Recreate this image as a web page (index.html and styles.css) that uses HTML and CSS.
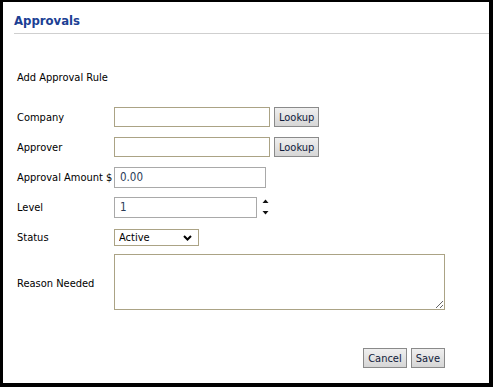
FILE: index.html
```html
<!DOCTYPE html>
<html lang="en">
<head>
<meta charset="utf-8">
<title>Approvals</title>
<link rel="stylesheet" href="styles.css">
</head>
<body>
<div class="panel">
  <div class="header">
    <h1 class="title">Approvals</h1>
  </div>
  <form class="form">
    <div class="section-title">Add Approval Rule</div>
    <div class="grid">
      <label class="label">Company</label>
      <div class="field">
        <input class="input input-khaki w-wide" type="text">
        <button type="button" class="btn">Lookup</button>
      </div>

      <label class="label">Approver</label>
      <div class="field">
        <input class="input input-khaki w-wide" type="text">
        <button type="button" class="btn">Lookup</button>
      </div>

      <label class="label">Approval Amount $</label>
      <div class="field">
        <input class="input input-grey w-amount" type="text" value="0.00">
      </div>

      <label class="label">Level</label>
      <div class="field">
        <input class="input input-grey w-level" type="text" value="1">
        <span class="spinner">
          <svg width="7" height="18" viewBox="0 0 7 18"><path d="M0.5 5 L3.5 1.5 L6.5 5 Z" fill="#111"/><path d="M0.5 13 L3.5 16.5 L6.5 13 Z" fill="#111"/></svg>
        </span>
      </div>

      <label class="label">Status</label>
      <div class="field">
        <div class="select-wrap">
          <select class="select"><option>Active</option><option>Inactive</option></select>
          <svg class="chevron" width="9" height="6" viewBox="0 0 9 6"><path d="M1 1 L4.5 4.5 L8 1" fill="none" stroke="#000" stroke-width="2"/></svg>
        </div>
      </div>

      <label class="label label-reason">Reason Needed</label>
      <div class="field">
        <textarea class="textarea"></textarea>
      </div>
    </div>
    <div class="actions">
      <button type="button" class="btn">Cancel</button>
      <button type="button" class="btn">Save</button>
    </div>
  </form>
</div>
</body>
</html>
```
FILE: styles.css
```css
html, body {
  margin: 0;
  padding: 0;
  background: #000;
  height: 100%;
}
body {
  padding: 2px 4px 4px 3px;
  box-sizing: border-box;
  font-family: "DejaVu Sans Condensed", "DejaVu Sans", "Liberation Sans", sans-serif;
  font-size: 11px;
  color: #000;
}
.panel {
  background: #fff;
  height: 100%;
  display: flex;
  flex-direction: column;
}
.header {
  margin-left: 11px;
  height: 31px;
  border-bottom: 1px solid #cfcfcf;
}
.title {
  margin: 0;
  padding-top: 10px;
  font-size: 13px;
  line-height: 17px;
  font-weight: bold;
  color: #1c3f94;
}
.form {
  padding-left: 14px;
  width: 428px;
}
.section-title {
  margin-top: 37px;
  line-height: 14px;
}
.grid {
  margin-top: 17px;
  display: grid;
  grid-template-columns: 97px auto;
  grid-template-rows: repeat(5, 30px) auto;
  align-items: center;
}
.label {
  line-height: 14px;
  padding-top: 2px;
}
.label-reason {
  padding-top: 5px;
}
.field {
  display: flex;
  align-items: center;
  gap: 4px;
}
.input {
  box-sizing: border-box;
  margin: 0;
  padding: 0 5px;
  font: inherit;
  font-size: 11.5px;
  color: #2b3b57;
  background: #fff;
  outline: none;
}
.input-khaki {
  border: 1px solid #aba385;
  height: 20px;
}
.input-grey {
  border: 1px solid #a9a9a9;
  height: 21px;
}
.w-wide { width: 156px; }
.w-amount { width: 152px; }
.w-level { width: 143px; }
.spinner {
  display: flex;
  margin-left: 1px;
}
.btn {
  box-sizing: border-box;
  height: 20px;
  margin: 0;
  padding: 0 4px;
  font: inherit;
  font-size: 11px;
  color: #0f1a3a;
  border: 1px solid #8a8a8a;
  background: linear-gradient(#efefef, #d6d6d6);
  border-radius: 0;
}
.select-wrap {
  position: relative;
  display: flex;
}
.select {
  box-sizing: border-box;
  appearance: none;
  -webkit-appearance: none;
  width: 85px;
  height: 17px;
  margin: 0;
  padding: 0 0 0 4px;
  font: inherit;
  font-size: 11px;
  color: #000;
  background: #fff;
  border: 1px solid #aba385;
  border-radius: 0;
  outline: none;
}
.chevron {
  position: absolute;
  right: 7px;
  top: 6px;
  pointer-events: none;
}
.textarea {
  box-sizing: border-box;
  width: 331px;
  height: 56px;
  margin: 2px 0 0;
  border: 1px solid #aba385;
  font: inherit;
  outline: none;
}
.actions {
  display: flex;
  justify-content: flex-end;
  gap: 4px;
  margin-top: 38px;
}
```
